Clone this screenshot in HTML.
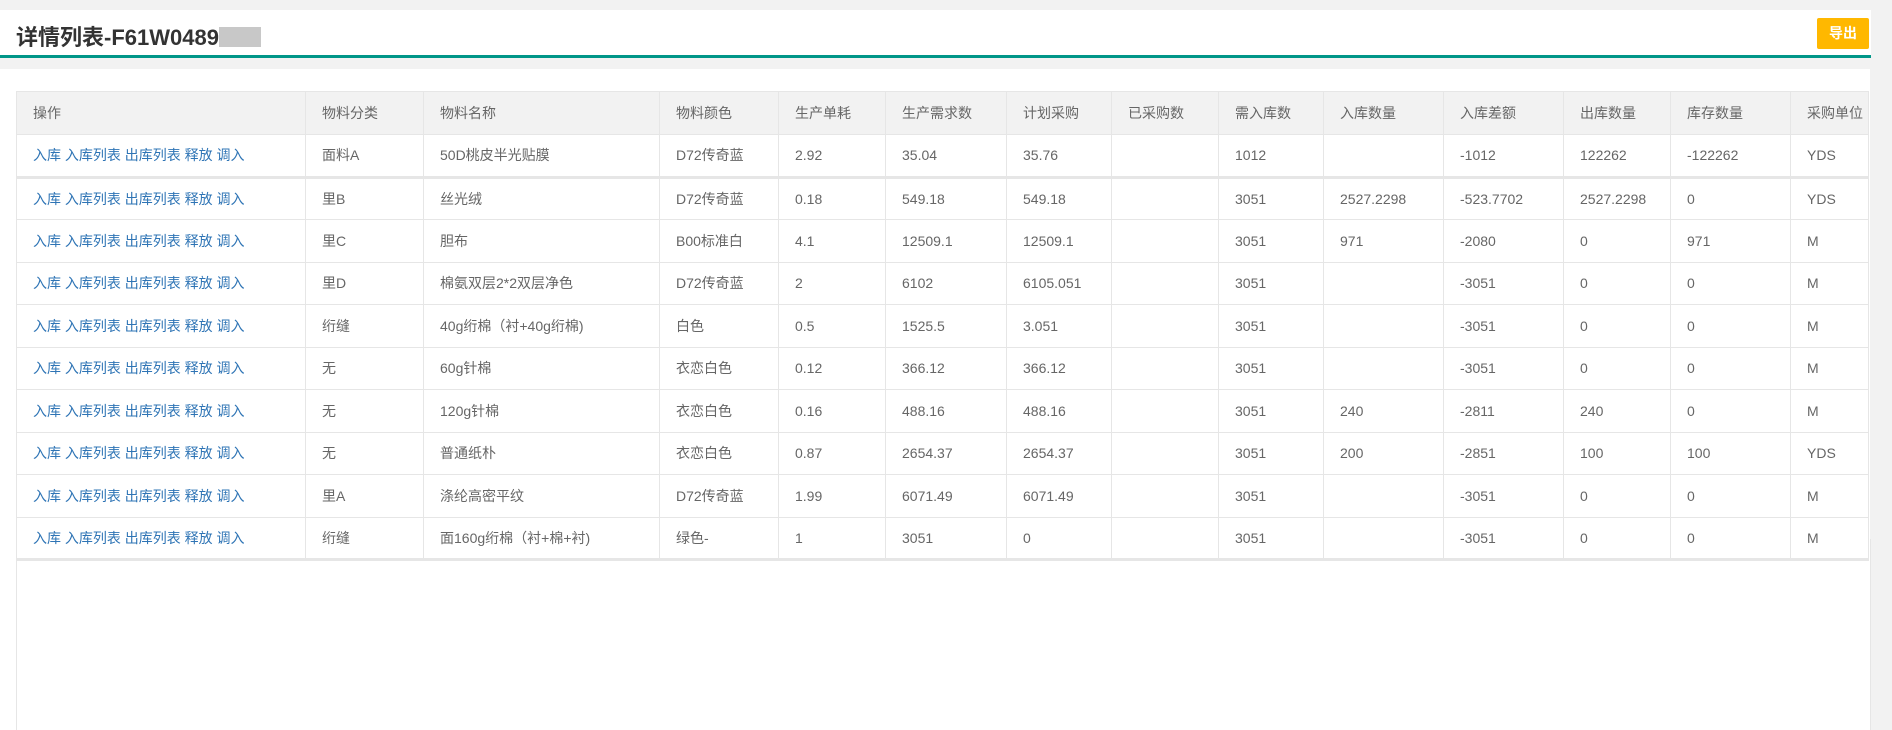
<!DOCTYPE html>
<html><head><meta charset="utf-8"><style>
body{margin:0;width:1892px;height:730px;background:#f2f2f2;font-family:"Liberation Sans","Noto Sans CJK SC",sans-serif;overflow:hidden;position:relative}
.hdr{position:absolute;left:0;top:10px;width:1871px;height:45px;background:#fff;border-bottom:3px solid #009688}
.hdr h1{margin:0;position:absolute;left:16px;top:10px;font-size:22px;font-weight:bold;color:#333}
.blur{display:inline-block;width:42px;height:20px;background:#c8c8c8;vertical-align:-2px}
.btn{position:absolute;left:1817px;top:8px;width:52px;height:31px;background:#ffb800;color:#fff;font-size:14px;font-weight:bold;line-height:31px;text-align:center;border-radius:2px}
.panel{position:absolute;left:0;top:69px;width:1870px;height:661px;background:#fff}
table{position:absolute;left:16px;top:22px;border-collapse:collapse;table-layout:fixed;font-size:14px;color:#666}
td,th{border:1px solid #e6e6e6;padding:0 0 0 16px;text-align:left;font-weight:normal;white-space:nowrap;overflow:hidden}
tr{height:42.5px}
th{background:#f2f2f2;color:#666}
tr.h{height:43px}
tr.f td{border-bottom:3px solid #e6e6e6}
a{color:#2e74b5;text-decoration:none}
.bot{position:absolute;left:16px;top:470px;width:1853px;height:191px;border-left:1px solid #e6e6e6;border-right:1px solid #e6e6e6}
</style></head><body>
<div class="hdr"><h1>详情列表-F61W0489<span class="blur"></span></h1><div class="btn">导出</div></div>
<div class="panel">
<table>
<colgroup><col style="width:289px"><col style="width:118px"><col style="width:236px"><col style="width:119px"><col style="width:107px"><col style="width:121px"><col style="width:105px"><col style="width:107px"><col style="width:105px"><col style="width:120px"><col style="width:120px"><col style="width:107px"><col style="width:120px"><col style="width:78px"></colgroup>
<tr class="h"><th>操作</th><th>物料分类</th><th>物料名称</th><th>物料颜色</th><th>生产单耗</th><th>生产需求数</th><th>计划采购</th><th>已采购数</th><th>需入库数</th><th>入库数量</th><th>入库差额</th><th>出库数量</th><th>库存数量</th><th>采购单位</th></tr>
<tr class="f"><td><a>入库 入库列表 出库列表 释放 调入</a></td><td>面料A</td><td>50D桃皮半光贴膜</td><td>D72传奇蓝</td><td>2.92</td><td>35.04</td><td>35.76</td><td></td><td>1012</td><td></td><td>-1012</td><td>122262</td><td>-122262</td><td>YDS</td></tr>
<tr><td><a>入库 入库列表 出库列表 释放 调入</a></td><td>里B</td><td>丝光绒</td><td>D72传奇蓝</td><td>0.18</td><td>549.18</td><td>549.18</td><td></td><td>3051</td><td>2527.2298</td><td>-523.7702</td><td>2527.2298</td><td>0</td><td>YDS</td></tr>
<tr><td><a>入库 入库列表 出库列表 释放 调入</a></td><td>里C</td><td>胆布</td><td>B00标准白</td><td>4.1</td><td>12509.1</td><td>12509.1</td><td></td><td>3051</td><td>971</td><td>-2080</td><td>0</td><td>971</td><td>M</td></tr>
<tr><td><a>入库 入库列表 出库列表 释放 调入</a></td><td>里D</td><td>棉氨双层2*2双层净色</td><td>D72传奇蓝</td><td>2</td><td>6102</td><td>6105.051</td><td></td><td>3051</td><td></td><td>-3051</td><td>0</td><td>0</td><td>M</td></tr>
<tr><td><a>入库 入库列表 出库列表 释放 调入</a></td><td>绗缝</td><td>40g绗棉（衬+40g绗棉)</td><td>白色</td><td>0.5</td><td>1525.5</td><td>3.051</td><td></td><td>3051</td><td></td><td>-3051</td><td>0</td><td>0</td><td>M</td></tr>
<tr><td><a>入库 入库列表 出库列表 释放 调入</a></td><td>无</td><td>60g针棉</td><td>衣恋白色</td><td>0.12</td><td>366.12</td><td>366.12</td><td></td><td>3051</td><td></td><td>-3051</td><td>0</td><td>0</td><td>M</td></tr>
<tr><td><a>入库 入库列表 出库列表 释放 调入</a></td><td>无</td><td>120g针棉</td><td>衣恋白色</td><td>0.16</td><td>488.16</td><td>488.16</td><td></td><td>3051</td><td>240</td><td>-2811</td><td>240</td><td>0</td><td>M</td></tr>
<tr><td><a>入库 入库列表 出库列表 释放 调入</a></td><td>无</td><td>普通纸朴</td><td>衣恋白色</td><td>0.87</td><td>2654.37</td><td>2654.37</td><td></td><td>3051</td><td>200</td><td>-2851</td><td>100</td><td>100</td><td>YDS</td></tr>
<tr><td><a>入库 入库列表 出库列表 释放 调入</a></td><td>里A</td><td>涤纶高密平纹</td><td>D72传奇蓝</td><td>1.99</td><td>6071.49</td><td>6071.49</td><td></td><td>3051</td><td></td><td>-3051</td><td>0</td><td>0</td><td>M</td></tr>
<tr class="f"><td><a>入库 入库列表 出库列表 释放 调入</a></td><td>绗缝</td><td>面160g绗棉（衬+棉+衬)</td><td>绿色-</td><td>1</td><td>3051</td><td>0</td><td></td><td>3051</td><td></td><td>-3051</td><td>0</td><td>0</td><td>M</td></tr>
</table>
<div class="bot"></div>
</div>
</body></html>
